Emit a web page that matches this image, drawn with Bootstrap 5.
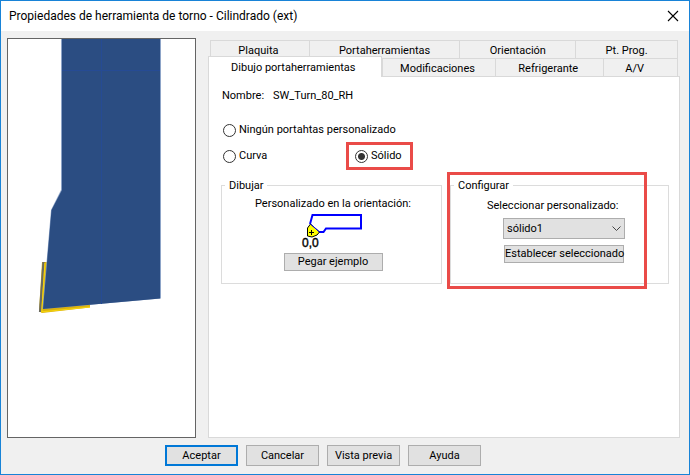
<!DOCTYPE html>
<html lang="es">
<head>
<meta charset="utf-8">
<meta name="viewport" content="width=device-width, initial-scale=1">
<title>Propiedades de herramienta de torno - Cilindrado (ext)</title>
<link rel="stylesheet" href="https://cdn.jsdelivr.net/npm/bootstrap@5.3.0/dist/css/bootstrap.min.css">
<style>
  body { font-family: Roboto, Tahoma, sans-serif; font-size: 11px; line-height: 14px; color: #000; }
  .dialog { min-height: 100vh; background: #f0f0f0; border: 1px solid #1883d7; }
  .titlebar { height: 30px; padding: 0 10px 0 8px; background: #fff; }
  .titlebar h1 { font: 12px/16px Roboto, "Segoe UI", sans-serif; }
  .close-x { width: 12px; height: 12px; }
  .work { padding: 7px 9px 0 6px; gap: 12px; }
  .preview { width: 189px; background: #fff; border: 1px solid #646464; }
  .preview svg { height: 397px; }
  .tabset { padding-top: 2px; }
  .tab-row { display: grid; margin: 0 2px; position: relative; }
  .tab-row-back { grid-template-columns: 99fr 151fr 116fr 103fr; }
  .tab-row-front { grid-template-columns: 174fr 114fr 108fr 75fr; margin-left: 0; }
  .tab-row .nav-link { height: 18px; padding: 1px 3px 0 0; border: 1px solid #d9d9d9; border-width: 1px 0 0 1px; border-radius: 0; background: #f0f0f0; color: #000; line-height: 18px; }
  .tab-row .nav-link:last-child { border-right-width: 1px; padding-right: 12px; }
  .tab-row .nav-link.active { height: 21px; margin: -2px 0 -1px; line-height: 16px; background: #fff; border-width: 1px 1px 0 1px; z-index: 1; }
  .tab-page { background: #fff; border: 1px solid #d9d9d9; padding: 12px 10px 0 13px; }
  .name-row { gap: 9px; }
  .opt { gap: 3px; }
  .opt .form-check-input { width: 13px; height: 13px; margin: 0; border-color: #333; background-color: #fff; }
  .opt .form-check-input:checked { background: radial-gradient(circle, #333 0 3px, #fff 4px); }
  .opts-top { padding: 20px 0 0 1px; }
  .opts-row { display: grid; grid-template-columns: 123px auto; justify-content: start; padding: 5px 0 0 1px; }
  .marked { border: 3px solid #ea4b48; padding: 0 8px 0 6px; height: 28px; }
  .groups { display: grid; grid-template-columns: 221fr 219fr; gap: 8px; padding-top: 8px; margin-left: -1px; }
  .group-box { height: 106px; border: 1px solid #dcdcdc; padding: 0 0 0 3px; }
  .group-box legend { font-size: 11px; line-height: 14px; margin: 0; padding: 1px 4px 0; float: none; width: auto; }
  .btn-win { --bs-btn-color: #000; --bs-btn-bg: #e1e1e1; --bs-btn-border-color: #adadad; --bs-btn-hover-bg: #e5f1fb; --bs-btn-hover-border-color: #0078d7; --bs-btn-hover-color: #000; --bs-btn-border-radius: 0; --bs-btn-padding-x: 0; --bs-btn-padding-y: 0; --bs-btn-font-size: 11px; --bs-btn-line-height: 14px; height: 18px; white-space: nowrap; }
  .btn-paste { width: 99px; }
  .btn-set { width: 120px; margin: 6px 0 0 1px; }
  .sample { width: 64px; height: 40px; margin: 0 0 2px; }
  .sample text { font: 12px "Liberation Sans", Arial, sans-serif; }
  .config { padding: 6px 0 0 33px; }
  .config .form-select { width: 122px; height: 21px; margin: 5px 0 0 16px; padding: 0 20px 0 3px; border: 1px solid #adadad; border-radius: 0; font-size: 11px; line-height: 14px; color: #000; background: #e1e1e1; }
  .picker { position: relative; width: 138px; }
  .picker svg { position: absolute; right: 4px; bottom: 7px; width: 9px; height: 6px; pointer-events: none; }
  .highlight { position: absolute; top: -6px; left: -3px; right: 22px; bottom: -5px; border: 3px solid #ea4b48; pointer-events: none; }
  .actions { padding: 7px 0 8px 164px; gap: 8px; }
  .actions .btn { width: 73px; height: 21px; }
  .actions .btn-default { border: 2px solid #0078d7; }
</style>
<script src="https://cdn.jsdelivr.net/npm/bootstrap@5.3.0/dist/js/bootstrap.bundle.min.js"></script>
</head>
<body>
<main class="dialog d-flex flex-column">
  <header class="titlebar d-flex align-items-center justify-content-between">
    <h1 class="m-0">Propiedades de herramienta de torno - Cilindrado (ext)</h1>
    <button type="button" class="btn p-0 border-0 d-flex" aria-label="Cerrar">
      <svg class="close-x" viewBox="0 0 12 12" stroke="#000" stroke-width="1.1"><path d="M1 1L11 11M11 1L1 11"/></svg>
    </button>
  </header>

  <div class="work d-flex flex-grow-1">
    <div class="preview flex-shrink-0">
      <svg class="w-100 d-block" viewBox="8 39 187 397" preserveAspectRatio="xMidYMin meet" role="img" aria-label="Vista del portaherramientas">
        <path d="M42 262L47 262L47 306L90 305L90 307.500L42 313L39 311Z" fill="#d8b010"/>
        <path d="M43.500 262L40 312" stroke="#6b6b62" stroke-width="2.200"/>
        <path d="M45 263L41.800 311.800L90 307" stroke="#f5d30a" stroke-width="1.200" fill="none"/>
        <path d="M61 39H161V298.500L42.500 309L51 210L61 190Z" fill="#8da4c8"/>
        <path d="M62 39H160V298.500L43 309L51.500 210L62 190Z" fill="#2b4d82"/>
        <path d="M101.500 39V304M62 70.500H160" stroke="#264b94" fill="none"/>
      </svg>
    </div>

    <div class="tabset flex-grow-1 d-flex flex-column">
      <div role="tablist" aria-label="Propiedades">
        <div class="tab-row tab-row-back">
          <button type="button" class="nav-link" role="tab">Plaquita</button>
          <button type="button" class="nav-link pe-0" role="tab">Portaherramientas</button>
          <button type="button" class="nav-link pe-0" role="tab">Orientación</button>
          <button type="button" class="nav-link pe-0" role="tab">Pt. Prog.</button>
        </div>
        <div class="tab-row tab-row-front">
          <button type="button" class="nav-link active" role="tab" aria-selected="true">Dibujo portaherramientas</button>
          <button type="button" class="nav-link" role="tab">Modificaciones</button>
          <button type="button" class="nav-link" role="tab">Refrigerante</button>
          <button type="button" class="nav-link" role="tab">A/V</button>
        </div>
      </div>

      <section class="tab-page flex-grow-1" role="tabpanel">
        <div class="name-row d-flex"><span>Nombre:</span><span>SW_Turn_80_RH</span></div>

        <div class="opts-top">
          <div class="opt d-flex align-items-center">
            <input class="form-check-input" type="radio" name="tipo" id="tipo-ninguno">
            <label for="tipo-ninguno">Ningún portahtas personalizado</label>
          </div>
        </div>
        <div class="opts-row">
          <div class="opt d-flex align-items-center">
            <input class="form-check-input" type="radio" name="tipo" id="tipo-curva">
            <label for="tipo-curva">Curva</label>
          </div>
          <div class="opt marked d-flex align-items-center">
            <input class="form-check-input" type="radio" name="tipo" id="tipo-solido" checked>
            <label for="tipo-solido">Sólido</label>
          </div>
        </div>

        <div class="groups">
          <fieldset class="group-box">
            <legend>Dibujar</legend>
            <div class="d-flex flex-column align-items-center pt-1">
              <span>Personalizado en la orientación:</span>
              <svg class="sample" viewBox="301 210 64 40" role="img" aria-label="Muestra de orientación">
                <path d="M310 223L312.500 214H361V227.500H326L323.500 231H319" fill="none" stroke="#00f" stroke-width="2"/>
                <path d="M310.500 223L319.500 231L317 234L312 236L307.500 235V227Z" fill="#ff0" stroke="#000"/>
                <path d="M310.500 223L319.500 231" stroke="#00f"/>
                <path d="M309 231.500H314M311.500 229V234" stroke="#000"/>
                <text x="302" y="246" stroke="#000" stroke-width=".4">0,0</text>
              </svg>
              <button type="button" class="btn btn-win btn-paste">Pegar ejemplo</button>
            </div>
          </fieldset>
          <div class="position-relative">
            <fieldset class="group-box">
              <legend>Configurar</legend>
              <div class="config">
                <div class="picker">
                  <label class="d-block text-nowrap" for="personalizado">Seleccionar personalizado:</label>
                  <select class="form-select" id="personalizado"><option>sólido1</option></select>
                  <svg viewBox="0 0 9 6" fill="none" stroke="#444"><path d="M.5 .5L4.500 4.500L8.500 .5"/></svg>
                </div>
                <div class="ps-3"><button type="button" class="btn btn-win btn-set">Establecer seleccionado</button></div>
              </div>
            </fieldset>
            <div class="highlight"></div>
          </div>
        </div>
      </section>
    </div>
  </div>

  <footer class="actions d-flex">
    <button type="button" class="btn btn-win btn-default">Aceptar</button>
    <button type="button" class="btn btn-win">Cancelar</button>
    <button type="button" class="btn btn-win">Vista previa</button>
    <button type="button" class="btn btn-win">Ayuda</button>
  </footer>
</main>
</body>
</html>
